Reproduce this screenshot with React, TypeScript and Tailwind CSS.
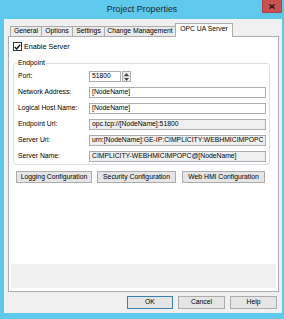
import React from "react";

const TABS = [
  { label: "General", w: "w-[32px]" },
  { label: "Options", w: "w-[32px]" },
  { label: "Settings", w: "w-[33px]" },
  { label: "Change Management", w: "w-[72px]" },
];

const FIELDS = [
  { label: "Network Address:", value: "[NodeName]", readOnly: false },
  { label: "Logical Host Name:", value: "[NodeName]", readOnly: false },
  { label: "Endpoint Url:", value: "opc.tcp://[NodeName]:51800", readOnly: true },
  { label: "Server Uri:", value: "urn:[NodeName]:GE-IP:CIMPLICITY:WEBHMICIMPOPC", readOnly: true },
  { label: "Server Name:", value: "CIMPLICITY-WEBHMICIMPOPC@[NodeName]", readOnly: true },
];

function TextBox({ value, readOnly, className }: { value: string; readOnly?: boolean; className?: string }) {
  return (
    <div
      className={`h-[11px] border border-[#abadb3] flex items-center pl-[2px] overflow-hidden whitespace-nowrap leading-none ${
        readOnly ? "bg-[#f0f0f0]" : "bg-white"
      } ${className ?? ""}`}
    >
      {value}
    </div>
  );
}

function Spinner() {
  return (
    <div className="ml-[1px] w-[9px] h-[11px] border border-[#abadb3] bg-[#f0f0f0] flex flex-col">
      <div className="flex-1 flex items-center justify-center border-b border-[#c4c4c4]">
        <svg width="5" height="3" viewBox="0 0 5 3">
          <path d="M0 3 L2.5 0 L5 3 Z" fill="#444" />
        </svg>
      </div>
      <div className="flex-1 flex items-center justify-center">
        <svg width="5" height="3" viewBox="0 0 5 3">
          <path d="M0 0 L2.5 3 L5 0 Z" fill="#444" />
        </svg>
      </div>
    </div>
  );
}

function Button({ children, className }: { children: React.ReactNode; className?: string }) {
  return (
    <div
      className={`flex items-center justify-center border bg-[#e5e5e5] leading-none whitespace-nowrap ${className ?? ""}`}
    >
      {children}
    </div>
  );
}

export default function App() {
  return (
    <div className="w-[284px] h-[319px] bg-[#5fc9ec] flex flex-col font-['Liberation_Sans',Arial,sans-serif] text-[6.8px] text-black">
      {/* Title bar */}
      <div className="h-[19px] relative flex items-center justify-center">
        <span className="text-[8.9px] text-[#1b2a33] leading-none">Project Properties</span>
        <div className="absolute top-0 right-[2px] w-[20px] h-[13px] bg-[#c75050] border border-t-0 border-[#a84545] flex items-center justify-center">
          <svg width="6" height="5" viewBox="0 0 6 5">
            <path d="M0.5 0.5 L5.5 4.5 M5.5 0.5 L0.5 4.5" stroke="#1a1a1a" strokeWidth="1.4" />
          </svg>
        </div>
      </div>

      {/* Client area */}
      <div className="ml-[4px] mr-[2px] h-[294px] bg-[#f0f0f0] flex flex-col">
        {/* Tab strip */}
        <div className="mt-[4px] h-[13px] ml-[6px] flex items-end">
          {TABS.map((t, i) => (
            <div
              key={t.label}
              className={`${t.w} h-[10px] border border-b-0 border-[#acacac] bg-[#ebebeb] flex items-center justify-center leading-none whitespace-nowrap ${
                i > 0 ? "-ml-px" : ""
              }`}
            >
              {t.label}
            </div>
          ))}
          <div className="relative z-10 -ml-px mb-[-1px] w-[58px] h-[14px] border border-b-0 border-[#acacac] bg-white flex items-start justify-center pt-[2px] leading-none whitespace-nowrap">
            OPC UA Server
          </div>
        </div>

        {/* Tab panel */}
        <div className="ml-[4px] w-[271px] h-[256px] border border-[#acacac] bg-white flex flex-col">
          <div className="flex-1 flex flex-col pl-[4px] pt-[5px]">
            <div className="flex items-center h-[9px]">
              <div className="w-[9px] h-[9px] border border-[#333] bg-white flex items-center justify-center">
                <svg width="7" height="6" viewBox="0 0 7 6">
                  <path d="M0.8 3 L2.6 4.9 L6.2 0.8" stroke="#111" strokeWidth="1.4" fill="none" />
                </svg>
              </div>
              <span className="ml-[2px] text-[7.2px] leading-none">Enable Server</span>
            </div>

            <fieldset className="mt-[8px] w-[257px] border border-[#d5dfe5] rounded-[3px] pl-[4px] pr-[2px] pb-[2px]">
              <legend className="-ml-[1px] px-[1px] leading-[8px]">Endpoint</legend>
              <div className="mt-[4px] flex flex-col gap-[5px]">
                <div className="flex items-center h-[11px]">
                  <span className="w-[71px] leading-none">Port:</span>
                  <TextBox value="51800" className="w-[32px]" />
                  <Spinner />
                </div>
                {FIELDS.map((f) => (
                  <div key={f.label} className="flex items-center h-[11px]">
                    <span className="w-[71px] leading-none whitespace-nowrap">{f.label}</span>
                    <TextBox value={f.value} readOnly={f.readOnly} className="w-[177px]" />
                  </div>
                ))}
              </div>
            </fieldset>

            <div className="mt-[6px] flex items-center">
              <Button className="ml-[3px] w-[76px] h-[12px] border-[#acacac]">Logging Configuration</Button>
              <Button className="ml-[5px] w-[79px] h-[12px] border-[#acacac]">Security Configuration</Button>
              <Button className="ml-[6px] w-[83px] h-[12px] border-[#acacac]">Web HMI Configuration</Button>
            </div>
          </div>
          <div className="mx-[2px] mb-[3px] h-[24px] bg-[#f0f0f0]" />
        </div>

        {/* Dialog buttons */}
        <div className="mt-[4px] h-[13px] flex justify-end gap-[5px] mr-[5px]">
          <Button className="w-[46px] h-[13px] border-[#3c7fb1]">OK</Button>
          <Button className="w-[47px] h-[13px] border-[#acacac]">Cancel</Button>
          <Button className="w-[47px] h-[13px] border-[#acacac]">Help</Button>
        </div>
      </div>
    </div>
  );
}
